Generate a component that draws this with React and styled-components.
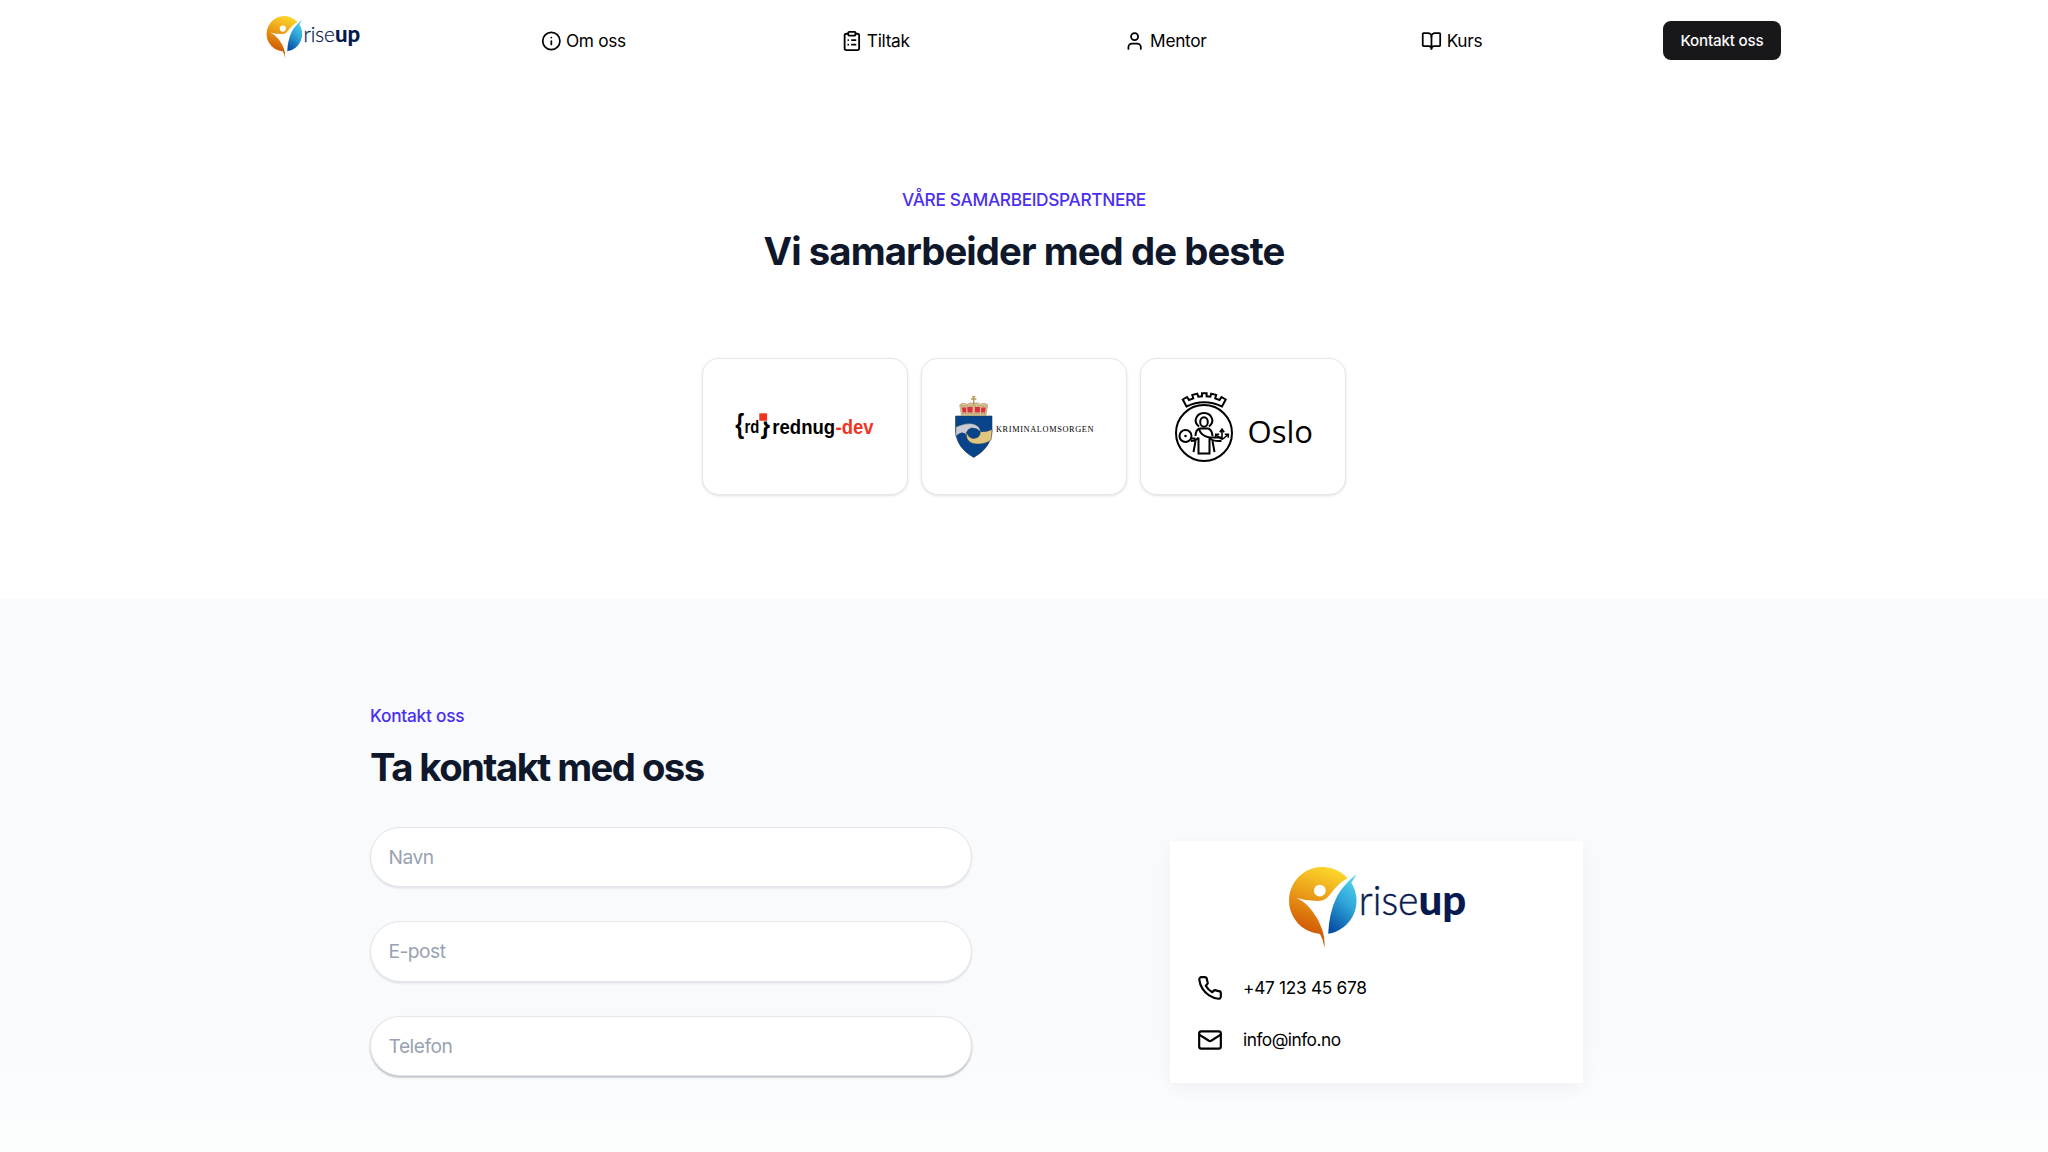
import React from "react";
import styled, { createGlobalStyle } from "styled-components";
import { Info, ClipboardList, User, BookOpen, Mail } from "lucide-react";
import { FiPhone } from "react-icons/fi";

const GlobalStyle = createGlobalStyle`
  * { box-sizing: border-box; }
  body {
    margin: 0;
    background: #fff;
    color: #000;
    font-family: Inter, "Liberation Sans", sans-serif;
    overflow: hidden;
  }
  h2, p { margin: 0; }
`;

const Page = styled.div`
  height: 1152px;
  display: flex;
  flex-direction: column;
`;

const Header = styled.header`
  width: 1515px;
  height: 81px;
  margin-left: 266px;
  display: flex;
  align-items: center;
  justify-content: space-between;
`;

const HomeLink = styled.a`
  display: flex;
  width: 94px;
  margin-top: -7px;
`;

const NavLink = styled.a`
  width: ${(p) => p.$width}px;
  display: flex;
  align-items: center;
  gap: 4.5px;
  margin: 0 34px;
  font-size: 17.3px;
  font-weight: 430;
  white-space: nowrap;
  letter-spacing: ${(p) => p.$tracking || -0.33}px;
`;

const ContactButton = styled.button`
  width: 118px;
  height: 39px;
  padding: 0;
  border: 0;
  border-radius: 8px;
  background: #18181b;
  color: #fafafa;
  font: 550 15.2px Inter, sans-serif;
  letter-spacing: -0.2px;
`;

const Partners = styled.section`
  height: 518px;
  padding-top: 104.5px;
  display: flex;
  flex-direction: column;
  align-items: center;
`;

const Eyebrow = styled.p`
  font-size: 17.3px;
  font-weight: ${(p) => p.$weight || 450};
  line-height: 28px;
  color: #4a2ff0;
  letter-spacing: ${(p) => p.$tracking}px;
`;

const Title = styled.h2`
  margin-top: 13px;
  font-size: 38.3px;
  font-weight: 670;
  line-height: 48px;
  color: #0f172a;
  white-space: nowrap;
  letter-spacing: ${(p) => p.$tracking}px;
`;

const PartnerRow = styled.div`
  display: flex;
  gap: 13px;
  margin-top: 83.5px;
`;

const PartnerCard = styled.div`
  width: 206px;
  height: 137px;
  display: flex;
  align-items: center;
  justify-content: center;
  padding-left: ${(p) => p.$shift || 0}px;
  border: 1px solid #e5e7eb;
  border-radius: 17px;
  background: #fff;
  box-shadow: 0 1px 3px rgba(15, 23, 42, 0.12);
`;

const Contact = styled.section`
  flex: 1;
  display: flex;
  align-items: flex-start;
  padding: 102.5px 0 0 370px;
  background: linear-gradient(#f8fafc 0, #f8fafc 440px, #fbfcfd 510px, #fcfdfd 100%);
`;

const Form = styled.form`
  width: 602px;
  display: flex;
  flex-direction: column;
`;

const Fields = styled.div`
  display: flex;
  flex-direction: column;
  gap: 34px;
  margin-top: 36px;
`;

const Field = styled.input`
  width: 100%;
  height: 60.5px;
  padding: 0 17.5px;
  border: 1px solid #e2e5ea;
  border-radius: 31px;
  background: #fff;
  outline: 0;
  font: 400 19.2px Inter, sans-serif;
  letter-spacing: -0.5px;
  box-shadow: 0 1.5px 2px rgba(15, 23, 42, ${(p) => (p.$deep ? 0.28 : 0.1)});
  &::placeholder { color: #98a2b1; opacity: 1; }
`;

const InfoCard = styled.aside`
  width: 413px;
  height: 242px;
  margin: 139.5px 0 0 198px;
  padding: 24px 27px;
  background: #fff;
  box-shadow: 0 6px 18px -2px rgba(15, 23, 42, 0.06);
`;

const LogoHolder = styled.div`
  display: flex;
  justify-content: center;
  margin-bottom: 25.5px;
`;

const InfoLine = styled.div`
  display: flex;
  align-items: center;
  gap: 20px;
  height: 26px;
  margin-bottom: 26px;
  font-size: 17.3px;
  font-weight: 430;
  letter-spacing: ${(p) => p.$tracking}px;
`;

function RiseUpLogo({ width, id }) {
  return (
    <svg width={width} height={(width * 84) / 178} viewBox="-0.8 -1.5 178 84" overflow="visible" role="img" aria-label="riseup">
      <defs>
        <linearGradient id={id + "sun"} x1="0.6" y1="0" x2="0.35" y2="1">
          <stop offset="0" stopColor="#fcd52a" />
          <stop offset="0.4" stopColor="#e99a18" />
          <stop offset="0.78" stopColor="#d45f05" />
          <stop offset="1" stopColor="#c94b08" />
        </linearGradient>
        <linearGradient id={id + "sea"} x1="0.7" y1="0" x2="0.3" y2="1">
          <stop offset="0" stopColor="#4fd3ee" />
          <stop offset="0.45" stopColor="#2fa5d8" />
          <stop offset="1" stopColor="#064fa4" />
        </linearGradient>
      </defs>
      <path
        fill={`url(#${id}sun)`}
        d="M58.700 11.700A33.500 33.500 0 1 0 31.200 67.400Q34.500 73 35.700 81.200Q36.200 71 33 62Q30 53 24 45.200Q17.500 36 7.700 31.500Q18 34.500 28.400 34.500Q35 34.500 38.500 31Q41 28.500 43.400 25.200Q50 16.500 58.700 11.700Z"
      />
      <circle cx="31" cy="24.200" r="5.900" fill="#fff" />
      <path fill={`url(#${id}sea)`} d="M67.700 7.500Q54 19 48.400 29.500Q44 38 41.700 48.500Q39.700 58 39.400 67.300A33.500 33.500 0 0 0 62.500 16.200Q65.500 12 67.700 7.500Z" />
      <g fontFamily="Lato, sans-serif" fontSize="42" fill="#071a4f">
        <text x="70" y="48.800" textLength="59.700" lengthAdjust="spacingAndGlyphs" fontWeight="300" stroke="#071a4f" strokeWidth="0.500">rise</text>
        <text x="129.700" y="48.800" textLength="47.800" lengthAdjust="spacingAndGlyphs" fontWeight="900">up</text>
      </g>
    </svg>
  );
}

function RednugLogo() {
  return (
    <svg width="140" height="36" viewBox="0.2 0 140 36" role="img" aria-label="rednug-dev">
      <g fontFamily="Liberation Sans, sans-serif" fontWeight="700">
        <text x="0.500" y="24" fontSize="27" textLength="9" lengthAdjust="spacingAndGlyphs">{"{"}</text>
        <text x="9.800" y="24" fontSize="19" textLength="14.800" lengthAdjust="spacingAndGlyphs">rd</text>
        <text x="25.800" y="24" fontSize="27" textLength="9.500" lengthAdjust="spacingAndGlyphs">{"}"}</text>
        <text x="37.500" y="24.500" fontSize="19.500" textLength="62.800" lengthAdjust="spacingAndGlyphs">rednug</text>
        <text x="100.700" y="24.500" fontSize="19.500" fill="#f03424" textLength="38" lengthAdjust="spacingAndGlyphs">-dev</text>
      </g>
      <path fill="#fff" d="M23.500 1h10.300v11.500h-10.300z" />
      <path fill="#f03424" d="M24.500 4.300h7.800v7.500h-7.800z" />
    </svg>
  );
}

function KriminalomsorgenLogo() {
  return (
    <svg width="140" height="64" viewBox="0 0 140 64" role="img" aria-label="Kriminalomsorgen">
      <path fill="#084489" stroke="#26384f" strokeWidth="0.6" d="M.5 21H37V36Q36 53 18.700 62.500Q1.500 53 .5 36Z" />
      <path fill="#c8ccd2" stroke="#28405f" strokeWidth="0.5" d="M.8 32Q9 28 16 28.500Q25 29.500 25.500 37Q22 32.500 16.500 33Q11 34.500 11.500 40Q7 35 .8 41.500Z" />
      <path fill="#e2c67f" stroke="#28405f" strokeWidth="0.5" d="M37 34.500Q31 37.500 25.500 36.500Q25 43.500 18 43.500Q13 42.500 11.500 37Q10 46 18 48.500Q29 50.500 36 45Q37 40 37 34.500Z" />
      <path fill="#d8c294" stroke="#a08a55" strokeWidth="0.500" d="M6.500 20.500 5 12q-1.500-2.500 2-3.500 3-.8 5 1 2-2.200 5-1.500h3.400q3-.7 5 1.500 2-1.800 5-1 3.500 1 2 3.500l-1.500 8.500Z" />
      <path fill="#da3141" d="M6.800 12.500h4.500v5H7.600zM12.300 12h5.300v5.500h-5zM19.800 12h5.300l-.3 5.500h-5zM26.200 12.500h4.600l-.8 5h-4z" />
      <path fill="none" stroke="#8d7442" strokeWidth="0.700" strokeDasharray="1.500 1.200" d="M7 18.800h23.500M6 11h25.500" />
      <path fill="none" stroke="#b79a5a" strokeWidth="1.500" d="M18.700 1v9M16 4h5.400M17.200 1.800h3" />
      <text x="41" y="37" fontFamily="Liberation Serif, serif" fontSize="8.300" textLength="97.500" lengthAdjust="spacing">KRIMINALOMSORGEN</text>
    </svg>
  );
}

function OsloLogo() {
  return (
    <svg width="140" height="74" viewBox="0 0 140 74" role="img" aria-label="Oslo">
      <g fill="none" stroke="#000" strokeWidth="2">
        <circle cx="30" cy="43" r="28" />
        <path d="M12.500 16.500 8.800 9.500l4.200-2.500 2 3 4.300-1.600-1-3.500 5-1.200 1 3 3.700-.4V3.300h4.600v3l3.700.4.900-3 5 1.200-1 3.500 4.300 1.600 2-3 4.200 2.500L48 16.500Q30 8 12.500 16.500Z" />
        <path d="M25 36.500Q20.500 33 22 28.500Q24 23 30 23Q36 23 38 28.500Q39.500 33 35 36.500" />
        <ellipse cx="30" cy="32" rx="3.800" ry="4.800" />
        <path d="M25.500 38.500Q21.500 40 21.500 46M34.500 38.500Q38 40 38.500 46M25.500 38.500H34.500M25 39Q27 46 35.500 47.500M24.500 47.500V63.500H35.500V47.500M17 51Q22 51 24.500 47.500M35.500 48Q38 51.500 47.500 51M35.500 47.500H47.500M16 48.500H21.500M21.500 51 19.500 62M38.500 51 40.500 62" />
        <circle cx="11.500" cy="46" r="6" />
        <path strokeWidth="1.600" d="M48 50V39.500m-2.200 2.700 2.200-3 2.200 3M47 49l-5-4.500m-.3 3.300v-3.500h3.500M49 49l5-4.500m.3 3.300v-3.500h-3.500" />
      </g>
      <circle cx="11.500" cy="46" r="1.300" />
      <text x="73.500" y="53" fontFamily="Open Sans, sans-serif" fontSize="31" textLength="65.500" lengthAdjust="spacingAndGlyphs">Oslo</text>
    </svg>
  );
}

export default function App() {
  return (
    <Page>
      <GlobalStyle />
      <Header>
        <HomeLink><RiseUpLogo width={94} id="top" /></HomeLink>
        <NavLink $width={85}><Info size={22} strokeWidth={2} />Om oss</NavLink>
        <NavLink $width={69}><ClipboardList size={22} strokeWidth={2} />Tiltak</NavLink>
        <NavLink $width={82}><User size={22} strokeWidth={2} />Mentor</NavLink>
        <NavLink $width={61}><BookOpen size={22} strokeWidth={2} />Kurs</NavLink>
        <ContactButton>Kontakt oss</ContactButton>
      </Header>
      <Partners>
        <Eyebrow $tracking={-0.34}>VÅRE SAMARBEIDSPARTNERE</Eyebrow>
        <Title $tracking={-0.93}>Vi samarbeider med de beste</Title>
        <PartnerRow>
          <PartnerCard><RednugLogo /></PartnerCard>
          <PartnerCard $shift={2}><KriminalomsorgenLogo /></PartnerCard>
          <PartnerCard $shift={2}><OsloLogo /></PartnerCard>
        </PartnerRow>
      </Partners>
      <Contact>
        <Form>
          <Eyebrow $tracking={-0.25}>Kontakt oss</Eyebrow>
          <Title $tracking={-1.57}>Ta kontakt med oss</Title>
          <Fields>
            <Field placeholder="Navn" />
            <Field placeholder="E-post" />
            <Field placeholder="Telefon" $deep />
          </Fields>
        </Form>
        <InfoCard>
          <LogoHolder><RiseUpLogo width={178} id="card" /></LogoHolder>
          <InfoLine $tracking={-0.3}><FiPhone size={26} />+47 123 45 678</InfoLine>
          <InfoLine $tracking={-0.5}><Mail size={26} strokeWidth={2} />info@info.no</InfoLine>
        </InfoCard>
      </Contact>
    </Page>
  );
}
